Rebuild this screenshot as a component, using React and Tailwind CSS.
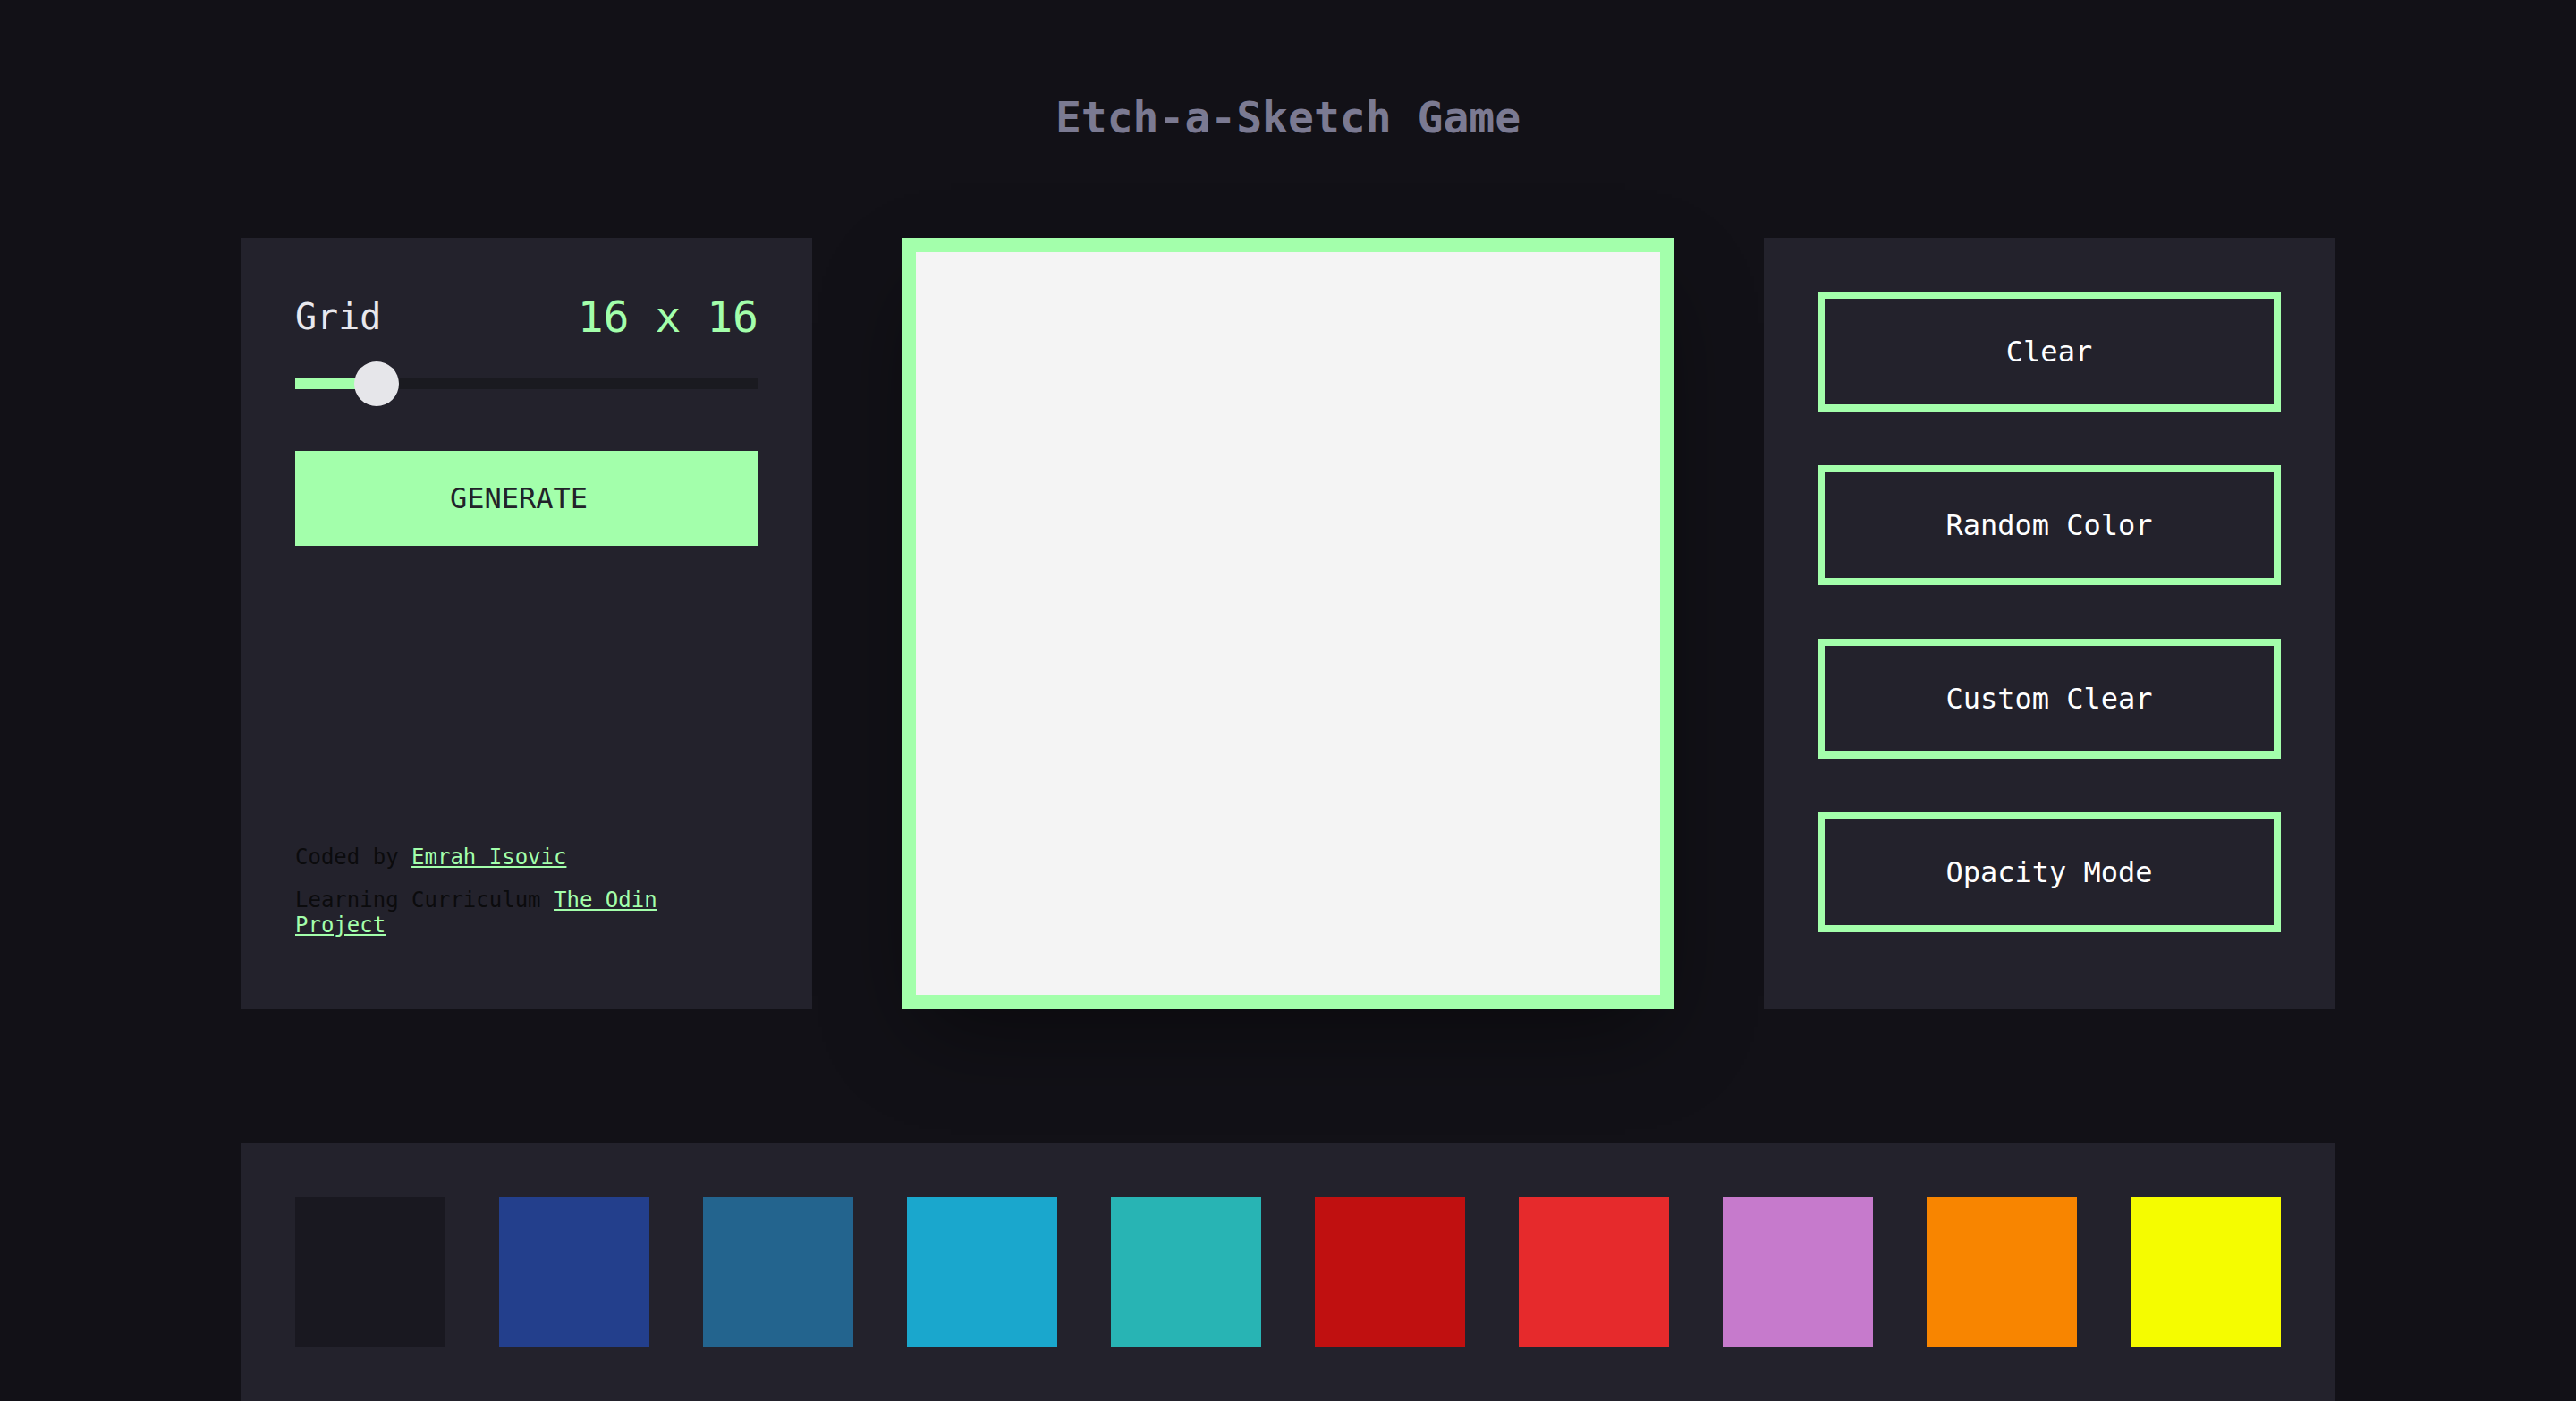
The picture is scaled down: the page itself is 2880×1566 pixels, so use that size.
import React from "react";

const swatches = [
  "bg-[#191820]",
  "bg-[#233f8c]",
  "bg-[#23648e]",
  "bg-[#1aa7cd]",
  "bg-[#28b4b4]",
  "bg-[#c01010]",
  "bg-[#e62a2c]",
  "bg-[#c67acc]",
  "bg-[#f88500]",
  "bg-[#f5fc00]",
];

const actions = ["Clear", "Random Color", "Custom Clear", "Opacity Mode"];

export default function App() {
  return (
    <div className="min-h-screen overflow-hidden bg-[#121117] font-['DejaVu_Sans_Mono',monospace]">
      <h1 className="pt-[103px] text-center text-[48px] font-bold leading-[56px] text-[#7b7a92]">
        Etch-a-Sketch Game
      </h1>

      <main className="mx-auto mt-[107px] flex w-[2340px] gap-[100px]">
        {/* settings */}
        <section className="flex w-[638px] flex-col bg-[#23222c] p-[60px]">
          <div className="flex h-[56px] items-center justify-between">
            <span className="text-[40px] leading-[47px] text-[#e8e8ee]">Grid</span>
            <span className="text-[48px] leading-[56px] text-[#a3ffab]">16 x 16</span>
          </div>

          <div className="relative mt-[22px] flex h-[50px] items-center">
            <div className="h-[12px] w-[91px] bg-[#a3ffab]" />
            <div className="h-[12px] flex-1 bg-[#1a1a20]" />
            <div className="absolute left-[66px] top-0 h-[50px] w-[50px] rounded-full bg-[#e6e6ea]" />
          </div>

          <button className="mt-[50px] h-[106px] w-full bg-[#a3ffab] pr-[18px] text-[32px] text-[#222229]">
            GENERATE
          </button>

          <div className="mt-auto text-[24px] leading-[28px] text-[#0b0b0d]">
            <p className="mb-[20px]">
              Coded by{" "}
              <a href="#" className="text-[#a3ffab] underline">
                Emrah Isovic
              </a>
            </p>
            <p className="mb-[20px]">
              Learning Curriculum{" "}
              <a href="#" className="text-[#a3ffab] underline">
                The Odin Project
              </a>
            </p>
          </div>
        </section>

        {/* sketch area */}
        <div className="h-[862px] w-[864px] shrink-0 border-[16px] border-[#a3ffab] bg-[#f4f4f4] shadow-[0_40px_100px_-20px_rgba(0,0,0,0.45)]" />

        {/* tools */}
        <section className="flex w-[638px] flex-col gap-[60px] bg-[#23222c] p-[60px]">
          {actions.map((label) => (
            <button
              key={label}
              className="h-[134px] w-full border-[8px] border-[#a3ffab] text-[32px] text-white"
            >
              {label}
            </button>
          ))}
        </section>
      </main>

      <div className="mx-auto mt-[150px] flex w-[2340px] gap-[60px] bg-[#23222c] p-[60px]">
        {swatches.map((c) => (
          <div key={c} className={`h-[168px] w-[168px] ${c}`} />
        ))}
      </div>
    </div>
  );
}
